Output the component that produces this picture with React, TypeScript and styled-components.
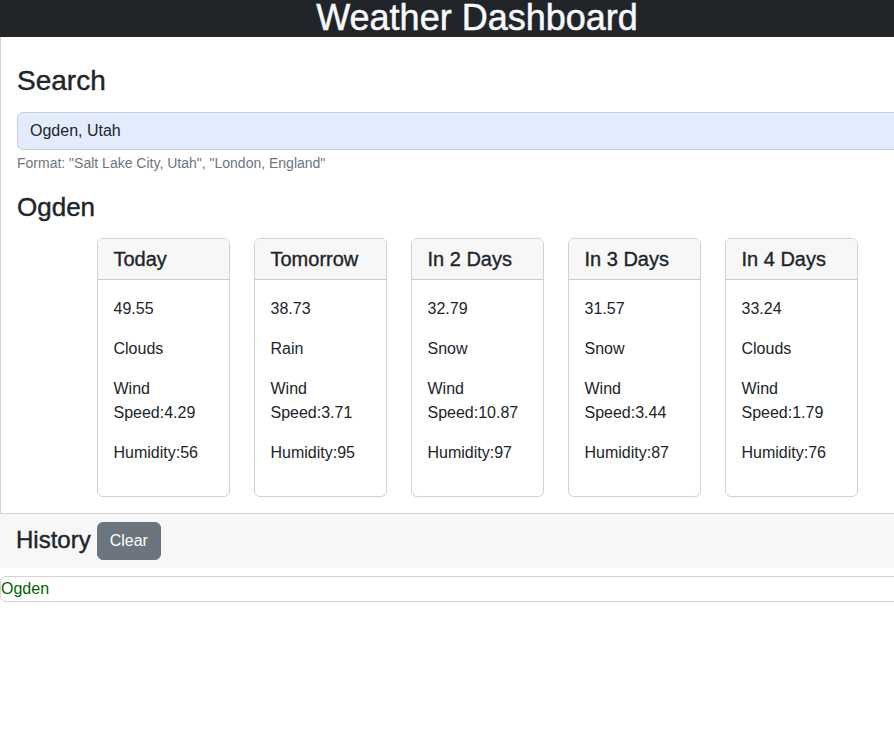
import React from "react";
import styled, { createGlobalStyle } from "styled-components";

const Global = createGlobalStyle`
  html, body { margin: 0; padding: 0; background: #fff; overflow-x: hidden; }
  body {
    font-family: "Liberation Sans", Arial, sans-serif;
    font-size: 16px;
    line-height: 1.5;
    color: #212529;
  }
  * { box-sizing: border-box; }
`;

const Page = styled.div`
  width: 954px;
`;

const TopBar = styled.header`
  height: 37px;
  background: #212529;
`;

const Title = styled.h1`
  margin: 0;
  text-align: center;
  color: #f8f9fa;
  font-size: 36px;
  font-weight: 500;
  line-height: 35px;
  -webkit-text-stroke: 0.5px #f8f9fa;
`;

const MainCard = styled.section`
  border: 1px solid rgba(0, 0, 0, 0.175);
  border-top: none;
  padding: 16px;
`;

const SearchHeading = styled.h2`
  margin: 11px 0 14px;
  font-size: 28px;
  font-weight: 500;
  line-height: 34px;
  -webkit-text-stroke: 0.4px #212529;
`;

const SearchInput = styled.input`
  display: block;
  width: 100%;
  height: 38px;
  padding: 6px 12px;
  font-family: inherit;
  font-size: 16px;
  color: #212529;
  background: #e3ecfd;
  border: 1px solid #c9ced6;
  border-radius: 6px;
  outline: none;
`;

const Hint = styled.div`
  margin-top: 3px;
  font-size: 14px;
  line-height: 21px;
  color: #6c757d;
`;

const CityHeading = styled.h3`
  margin: 18px 0 15px;
  font-size: 26px;
  font-weight: 500;
  line-height: 31px;
  -webkit-text-stroke: 0.4px #212529;
`;

const ForecastRow = styled.div`
  display: flex;
  justify-content: center;
  gap: 24px;
`;

const DayCard = styled.div`
  width: 133px;
  border: 1px solid rgba(0, 0, 0, 0.175);
  border-radius: 6px;
  overflow: hidden;
`;

const DayHeader = styled.div`
  padding: 8px 16px;
  background: #f7f7f7;
  border-bottom: 1px solid rgba(0, 0, 0, 0.175);
  font-size: 20px;
  font-weight: 500;
  line-height: 24px;
  -webkit-text-stroke: 0.35px #212529;
`;

const DayBody = styled.div`
  padding: 17px 16px 15px;
`;

const Stat = styled.p`
  margin: 0 0 16px;
  font-size: 16px;
  line-height: 24px;
`;

const HistoryBar = styled.div`
  display: flex;
  align-items: center;
  gap: 6px;
  padding: 8px 16px;
  background: #f7f7f7;
`;

const HistoryHeading = styled.h4`
  margin: 0 0 4px;
  font-size: 24px;
  font-weight: 500;
  line-height: 29px;
  -webkit-text-stroke: 0.4px #212529;
`;

const ClearButton = styled.button`
  height: 38px;
  padding: 6px 12px;
  font-family: inherit;
  font-size: 16px;
  line-height: 24px;
  color: #fff;
  background: #6c757d;
  border: 1px solid #6c757d;
  border-radius: 6px;
`;

const HistoryList = styled.ul`
  list-style: none;
  margin: 8px 0 0;
  padding: 0;
  border: 1px solid rgba(0, 0, 0, 0.175);
  border-radius: 6px;
`;

const HistoryItem = styled.li`
  color: #006400;
  font-size: 16px;
  line-height: 24px;
`;

const days = [
  { label: "Today", temp: "49.55", sky: "Clouds", wind: "4.29", hum: "56" },
  { label: "Tomorrow", temp: "38.73", sky: "Rain", wind: "3.71", hum: "95" },
  { label: "In 2 Days", temp: "32.79", sky: "Snow", wind: "10.87", hum: "97" },
  { label: "In 3 Days", temp: "31.57", sky: "Snow", wind: "3.44", hum: "87" },
  { label: "In 4 Days", temp: "33.24", sky: "Clouds", wind: "1.79", hum: "76" },
];

export default function App() {
  return (
    <Page>
      <Global />
      <TopBar>
        <Title>Weather Dashboard</Title>
      </TopBar>
      <MainCard>
        <SearchHeading>Search</SearchHeading>
        <SearchInput defaultValue="Ogden, Utah" />
        <Hint>Format: "Salt Lake City, Utah", "London, England"</Hint>
        <CityHeading>Ogden</CityHeading>
        <ForecastRow>
          {days.map((d) => (
            <DayCard key={d.label}>
              <DayHeader>{d.label}</DayHeader>
              <DayBody>
                <Stat>{d.temp}</Stat>
                <Stat>{d.sky}</Stat>
                <Stat>
                  Wind
                  <br />
                  Speed:{d.wind}
                </Stat>
                <Stat>Humidity:{d.hum}</Stat>
              </DayBody>
            </DayCard>
          ))}
        </ForecastRow>
      </MainCard>
      <HistoryBar>
        <HistoryHeading>History</HistoryHeading>
        <ClearButton>Clear</ClearButton>
      </HistoryBar>
      <HistoryList>
        <HistoryItem>Ogden</HistoryItem>
      </HistoryList>
    </Page>
  );
}
